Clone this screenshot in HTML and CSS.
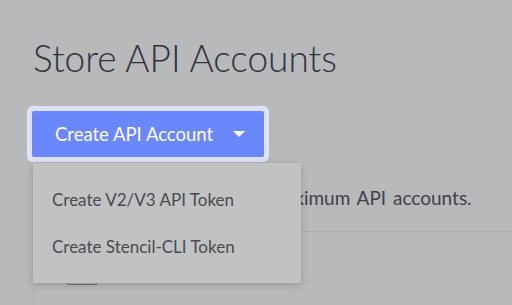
FILE: index.html
```html
<!DOCTYPE html>
<html lang="en">
  <head>
    <meta charset="UTF-8" />
    <meta name="viewport" content="width=device-width, initial-scale=1.0" />
    <title>Store API Accounts</title>
    <link rel="stylesheet" href="styles.css">
  </head>

  <body>
    <div class="page">
      <h1 class="title">Store API Accounts</h1>

      <div class="dropdown">
        <button class="create-btn" type="button">
          <span>Create API Account</span>
          <span class="caret"></span>
        </button>
        <ul class="menu">
          <li class="menu-item">Create V2/V3 API Token</li>
          <li class="menu-item">Create Stencil-CLI Token</li>
        </ul>
      </div>

      <p class="intro">Your store has reached the maximum API accounts.</p>

      <div class="accounts">
        <div class="accounts-head">
          <span class="check"></span>
        </div>
      </div>
    </div>
  </body>
</html>
```

FILE: styles.css
```css
body {
  font-family: Lato, "Liberation Sans", sans-serif;
  background-color: #b8b9ba;
  color: #3d414c;
  margin: 0;
  padding: 0;
}

.page {
  padding: 0 0 0 33px;
  height: 305px;
  overflow: hidden;
}

.title {
  margin: 0;
  padding-top: 35px;
  font-size: 37px;
  font-weight: 300;
  line-height: 46px;
  color: #2f3340;
}

.dropdown {
  position: relative;
  margin-top: 30px;
  margin-left: -1px;
  width: 232px;
}

.create-btn {
  display: flex;
  align-items: center;
  justify-content: space-between;
  width: 232px;
  height: 46px;
  padding: 0 19px 0 23px;
  border: none;
  border-radius: 2px;
  background-color: #6b87fc;
  box-shadow: 0 0 0 5px #dde2f6;
  color: #ffffff;
  font-family: inherit;
  font-size: 18.5px;
}

.caret {
  width: 0;
  height: 0;
  border-left: 6px solid transparent;
  border-right: 6px solid transparent;
  border-top: 6px solid #ffffff;
}

.menu {
  position: absolute;
  top: 52px;
  left: 1px;
  width: 268px;
  margin: 0;
  padding: 13px 0;
  list-style: none;
  background-color: #c2c2c2;
  box-shadow: 0 2px 8px rgba(0, 0, 0, 0.18);
  z-index: 2;
}

.menu-item {
  padding: 0 19px;
  height: 47px;
  line-height: 47px;
  font-size: 17px;
  color: #474b55;
}

.intro {
  margin: 28px 0 0;
  font-size: 19px;
  line-height: 26px;
  word-spacing: 2px;
  color: #3d414c;
}

.accounts {
  margin-top: 20px;
  height: 120px;
  border-top: 1px solid #aeafb1;
  border-left: 1px solid #aeafb1;
}

.accounts-head {
  padding: 35px 0 0 32px;
}

.check {
  display: block;
  width: 30px;
  height: 16px;
  border: 1px solid #6e717a;
  border-radius: 3px;
}
```
